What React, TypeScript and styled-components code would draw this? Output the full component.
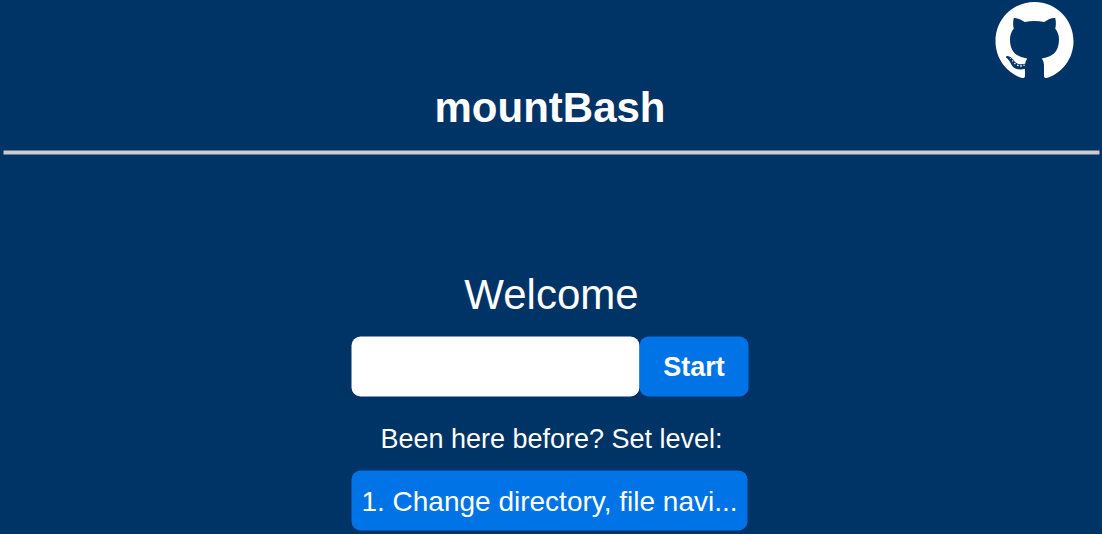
import React from "react";
import styled, { createGlobalStyle } from "styled-components";

const GlobalStyle = createGlobalStyle`
  * { box-sizing: border-box; }
  body { margin: 0; background: #003366; color: #fff; font-family: "Liberation Sans", Arial, sans-serif; overflow: hidden; }
`;
const Page = styled.div`
  display: flex;
  flex-direction: column;
  height: 534px;
  overflow: hidden;
`;
const TopBar = styled.div`
  display: flex;
  justify-content: flex-end;
  height: 80px;
  padding: 2px 28px 0 0;
`;
const GitHubMark = styled.svg`
  width: 79px;
  height: 77px;
  display: block;
`;
const Title = styled.h1`
  margin: 4px 2px 0 0;
  height: 67px;
  line-height: 48px;
  font-size: 42px;
  font-weight: 700;
  text-align: center;
`;
const Rule = styled.hr`
  width: 1096px;
  height: 4px;
  margin: 0 0 0 4px;
  border: 0;
  background: #ccc;
  transform: translate(-0.5px, -0.5px);
`;
const Welcome = styled.h2`
  margin: 116px 0 0 1px;
  height: 66px;
  line-height: 48px;
  font-size: 42px;
  font-weight: 400;
  text-align: center;
`;
const Form = styled.form`
  display: flex;
  flex-direction: column;
  width: 397px;
  margin-left: 352px;
`;
const Row = styled.div`
  display: flex;
`;
const NameInput = styled.input`
  width: 288px;
  height: 60px;
  border: 0;
  border-radius: 9px;
  background: #fff;
  padding: 0 12px;
  font: 28px "Liberation Sans", sans-serif;
  transform: translate(-0.5px, -0.5px);
`;
const Button = styled.button<{ $wide?: boolean }>`
  width: ${(p) => (p.$wide ? "396px" : "109px")};
  height: 60px;
  border: 0;
  border-radius: 9px;
  background: #0073e6;
  color: #fff;
  padding: ${(p) => (p.$wide ? "2px 0 0" : "0")};
  font: ${(p) => (p.$wide ? "400 28px" : "700 27px")} "Liberation Sans", sans-serif;
  white-space: nowrap;
  transform: translate(-0.5px, -0.5px);
`;
const Hint = styled.p`
  margin: 27px 0 0 2px;
  height: 47px;
  line-height: 31px;
  font-size: 27px;
  text-align: center;
  white-space: nowrap;
`;

export default function App() {
  return (
    <Page>
      <GlobalStyle />
      <TopBar>
        <GitHubMark viewBox="0 0 79 77" aria-label="GitHub">
          <path
            fill="#fff"
            d="M39.5 0C17.7 0 .5 17.5 .5 39.2C.5 56.5 11.6 70.8 27 76C29 76.4 30 75.3 30 74L30 66.8C25 67.900 20.500 67.700 17.500 64.200C15.500 61.600 15.300 58.800 11.200 55.800C10.600 54.500 12 53.800 13.400 54.200C17.200 55 18.300 58.300 20.800 60.600C23.200 62.500 27 62.600 30.200 61.800C30.500 59.500 31 58 32.300 56.400C22.500 55.300 15 50.500 15 37.500C15 33 16.500 29.500 18.800 26.500C17.900 23.500 17.900 19.500 18.800 16.100C22.300 15.800 26 17.500 29.800 20.100C36 18.700 43 18.700 49.200 20.100C53 17.500 56.700 15.800 60.200 16.100C61.100 19.500 61.100 23.500 60.200 26.500C62.500 29.500 64 33 64 37.500C64 50.500 56.500 55.300 46.700 56.400C48.500 58.500 49 61 49 64.500L49 74C49 75.3 50 76.4 52 76C67.400 70.800 78.500 56.500 78.500 39.200C78.500 17.500 61.300 0 39.500 0Z"
          />
          <g fill="#fff">
            <circle cx="15.600" cy="56.500" r="0.5" />
            <circle cx="17.600" cy="59" r="0.7" />
            <circle cx="19.800" cy="61.600" r="0.8" />
            <circle cx="22.800" cy="63.300" r="0.9" />
            <circle cx="26" cy="63.900" r="0.9" />
            <circle cx="29" cy="63.200" r="0.8" />
          </g>
        </GitHubMark>
      </TopBar>
      <Title>mountBash</Title>
      <Rule />
      <Welcome>Welcome</Welcome>
      <Form onSubmit={(e) => e.preventDefault()}>
        <Row>
          <NameInput aria-label="Name" />
          <Button>Start</Button>
        </Row>
        <Hint>Been here before? Set level:</Hint>
        <Button type="button" $wide>1. Change directory, file navi...</Button>
      </Form>
    </Page>
  );
}
